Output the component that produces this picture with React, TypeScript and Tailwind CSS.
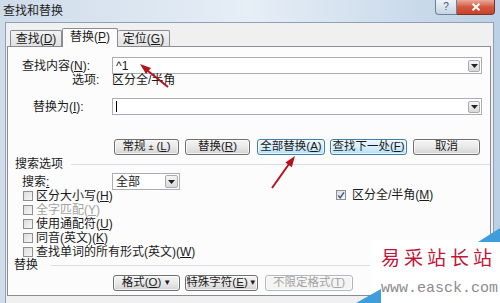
import React from 'react';

const FONT = "font-['Liberation_Sans','Noto_Sans_CJK_SC',sans-serif]";

function Key({ k }: { k: string }) {
  // 带下划线的快捷键字母
  return (
    <>
      (<u className="underline-offset-1">{k}</u>)
    </>
  );
}

function DropArrow({ className = '' }: { className?: string }) {
  return (
    <div
      className={`flex items-center justify-center border border-[#a9abaf] rounded-[2px] bg-linear-to-b from-[#f6f6f6] to-[#d9d9d9] ${className}`}
    >
      <svg width="7" height="4" viewBox="0 0 7 4">
        <polygon points="0,0 7,0 3.5,4" fill="#222" />
      </svg>
    </div>
  );
}

function Btn({
  className = '',
  blue,
  disabled,
  children,
}: {
  className?: string;
  blue?: boolean;
  disabled?: boolean;
  children: React.ReactNode;
}) {
  let look = 'border-[#707070] bg-linear-to-b from-[#f4f4f4] via-[#e9e9e9] to-[#d3d3d3] text-[#1a1a1a]';
  if (blue) look = 'border-[#3c7fb1] bg-linear-to-b from-[#eaf6fd] via-[#d8effc] to-[#b2def7] text-[#1a1a1a]';
  if (disabled) look = 'border-[#b5b8bb] bg-[#f4f4f4] text-[#a3a3a3]';
  return (
    <div
      className={`h-[16px] flex items-center justify-center border rounded-[3px] text-[11.5px] leading-none shadow-[inset_0_0_0_1px_rgba(255,255,255,0.7)] ${look} ${className}`}
    >
      {children}
    </div>
  );
}

function Check({ checked }: { checked?: boolean }) {
  return (
    <div className="w-[10px] h-[10px] border border-[#8e8f8f] bg-linear-to-br from-[#dcdcdc] to-[#f8f8f8] flex items-center justify-center shrink-0">
      {checked && (
        <svg width="9" height="9" viewBox="0 0 9 9">
          <path d="M1.5 4.5 L3.6 7.2 L7.8 1" stroke="#3b5488" strokeWidth="1.6" fill="none" />
        </svg>
      )}
    </div>
  );
}

const OPTIONS = [
  { text: '区分大小写', k: 'H' },
  { text: '全字匹配', k: 'Y', disabled: true },
  { text: '使用通配符', k: 'U' },
  { text: '同音(英文)', k: 'K' },
  { text: '查找单词的所有形式(英文)', k: 'W' },
];

export default function App() {
  return (
    <div
      className={`relative w-[500px] h-[303px] overflow-hidden flex flex-col bg-linear-to-r from-[#cfdcea] via-[#e6eef6] to-[#bcd0e5] ${FONT}`}
    >
      {/* 标题栏 */}
      <div className="h-[22px] flex items-start shrink-0">
        <div className="pl-[3px] pt-[5px] text-[12px] leading-none text-[#1e1e1e]">查找和替换</div>
        <div className="ml-auto mr-[5px] flex">
          <div className="w-[22px] h-[15px] border border-t-0 border-[#6f819a] rounded-bl-[4px] bg-linear-to-b from-[#eef3f8] to-[#c5d4e4] flex items-center justify-center text-[10px] leading-none text-[#41597a]">
            ?
          </div>
          <div className="w-[38px] h-[15px] border border-t-0 border-l-0 border-[#7a3328] rounded-br-[4px] bg-linear-to-b from-[#e9a99b] via-[#d2573e] to-[#c8432b] flex items-center justify-center">
            <svg width="10" height="8" viewBox="0 0 10 8">
              <path d="M1.5 0.8 L8.5 7.2 M8.5 0.8 L1.5 7.2" stroke="#fff" strokeWidth="2" />
            </svg>
          </div>
        </div>
      </div>

      {/* 客户区 */}
      <div className="flex-1 ml-[5px] mr-[6px] bg-[#f0f0f0] border-l border-t border-r border-[#8fa1b6] pt-[5px] flex flex-col">
        {/* 选项卡 */}
        <div className="flex items-end h-[18px] ml-[4px] text-[12px] leading-none text-[#1a1a1a]">
          <div className="w-[52px] h-[16px] border border-b-0 border-[#898c95] rounded-t-[2px] bg-linear-to-b from-[#f3f3f3] to-[#e1e1e1] flex items-center justify-center">
            查找<Key k="D" />
          </div>
          <div className="relative z-10 -mb-[1px] w-[56px] h-[19px] border border-b-0 border-[#898c95] rounded-t-[2px] bg-[#fcfcfc] flex items-center justify-center pb-[2px]">
            替换<Key k="P" />
          </div>
          <div className="w-[52px] h-[16px] border border-b-0 border-l-0 border-[#898c95] rounded-t-[2px] bg-linear-to-b from-[#f3f3f3] to-[#e1e1e1] flex items-center justify-center">
            定位<Key k="G" />
          </div>
        </div>

        {/* 选项卡面板 */}
        <div className="ml-[1px] mr-[2px] h-[250px] border border-[#898c95] bg-[#fcfcfc] flex flex-col text-[12px] leading-none text-[#1a1a1a]">
          {/* 查找内容 */}
          <div className="mt-[10px] h-[17px] flex items-center">
            <div className="w-[104px] pl-[14px]">
              查找内容<Key k="N" />:
            </div>
            <div className="w-[370px] h-[17px] border border-[#abadb3] bg-white flex items-center pl-[3px]">
              <span className="text-[12px]">^1</span>
              <DropArrow className="ml-auto mr-[1px] w-[12px] h-[12px]" />
            </div>
          </div>
          {/* 选项 */}
          <div className="h-[12px] flex items-center">
            <div className="w-[104px] pl-[64px]">选项:</div>
            <div>区分全/半角</div>
          </div>
          {/* 替换为 */}
          <div className="mt-[12px] h-[17px] flex items-center">
            <div className="w-[104px] pl-[25px]">
              替换为<Key k="I" />:
            </div>
            <div className="w-[370px] h-[17px] border border-[#abadb3] bg-white flex items-center pl-[3px]">
              <div className="w-[1px] h-[11px] bg-black" />
              <DropArrow className="ml-auto mr-[1px] w-[12px] h-[12px]" />
            </div>
          </div>
          {/* 按钮行 */}
          <div className="mt-[24px] flex">
            <Btn className="ml-[106px] w-[65px]">
              常规 <span className="text-[9px] mx-[3px]">±</span>
              <Key k="L" />
            </Btn>
            <Btn className="ml-[6px] w-[65px]">
              替换<Key k="R" />
            </Btn>
            <Btn blue className="ml-[7px] w-[68px]">
              全部替换<Key k="A" />
            </Btn>
            <Btn blue className="ml-[5px] w-[77px]">
              查找下一处<Key k="F" />
            </Btn>
            <Btn className="ml-[6px] w-[67px]">取消</Btn>
          </div>

          {/* 搜索选项 */}
          <div className="mt-[3px] h-[12px] flex items-center pl-[7px]">
            <span>搜索选项</span>
            <div className="flex-1 ml-[8px] h-[1px] bg-[#d5dfe5]" />
          </div>
          <div className="mt-[3px] h-[17px] flex items-center">
            <div className="w-[104px] pl-[14px]">
              搜索<u>:</u>
            </div>
            <div className="w-[68px] h-[17px] border border-[#abadb3] bg-white flex items-center pl-[3px]">
              <span>全部</span>
              <DropArrow className="ml-auto mr-[1px] w-[13px] h-[13px]" />
            </div>
          </div>
          <div className="-mt-[1px] flex flex-col pl-[15px]">
            {OPTIONS.map((o, i) => (
              <div key={o.k} className="h-[14px] flex items-center">
                <div className="w-[313px] flex items-center">
                  <Check />
                  <span className={`ml-[3px] ${o.disabled ? 'text-[#a3a3a3]' : ''}`}>
                    {o.text}
                    <Key k={o.k} />
                  </span>
                </div>
                {i === 0 && (
                  <div className="flex items-center -mt-[2px]">
                    <Check checked />
                    <span className="ml-[6px]">
                      区分全/半角<Key k="M" />
                    </span>
                  </div>
                )}
              </div>
            ))}
          </div>

          {/* 替换 */}
          <div className="h-[12px] flex items-center pl-[6px]">
            <span>替换</span>
            <div className="flex-1 ml-[13px] h-[1px] bg-[#d5dfe5]" />
          </div>
          <div className="mt-[4px] flex">
            <Btn className="ml-[105px] w-[67px]">
              格式<Key k="O" />
              <span className="text-[8px] ml-[2px]">▼</span>
            </Btn>
            <Btn className="ml-[5px] w-[73px]">
              特殊字符<Key k="E" />
              <span className="text-[8px] ml-[1px]">▼</span>
            </Btn>
            <Btn disabled className="ml-[7px] w-[88px]">
              不限定格式<Key k="T" />
            </Btn>
          </div>
        </div>
      </div>

      {/* 水印 */}
      <div className="absolute left-[370px] top-[240px] w-[130px] h-[63px] bg-white">
        <div className="pl-[11px] pt-[9px] text-[19px] leading-none tracking-[4px] text-[#c0163a] whitespace-nowrap">
          易采站长站
        </div>
        <div className="pl-[11px] pt-[13px] font-['Liberation_Mono',monospace] text-[15px] leading-none text-[#8c8c8c] whitespace-nowrap">
          www.easck.com
        </div>
      </div>

      {/* 箭头与装饰 */}
      <svg className="absolute left-0 top-0 pointer-events-none" width="500" height="303" viewBox="0 0 500 303">
        <polygon points="478,242 500,242 500,228" fill="#3f9ddc" />
        <polygon points="356,303 381,303 381,289" fill="#3f9ddc" />
        <line x1="168" y1="87" x2="148" y2="71" stroke="#b3121f" strokeWidth="2" />
        <polygon points="140,64 151,67.9 146,74.1" fill="#b3121f" />
        <line x1="272" y1="188" x2="289" y2="164" stroke="#b3121f" strokeWidth="2" />
        <polygon points="295,156 291.8,167.2 285.4,162.6" fill="#b3121f" />
      </svg>
    </div>
  );
}
